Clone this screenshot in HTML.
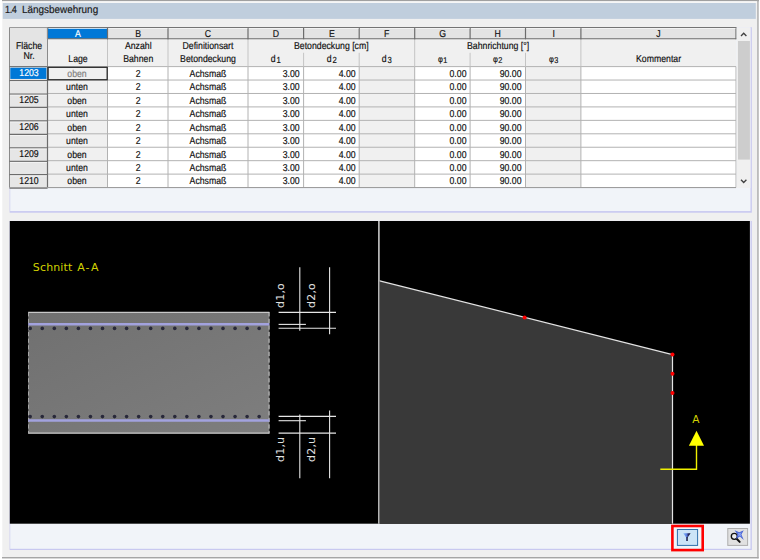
<!DOCTYPE html>
<html lang="de">
<head>
<meta charset="utf-8">
<title>1.4 Längsbewehrung</title>
<style>
html,body{margin:0;padding:0;background:#fff;}
body{width:760px;height:560px;overflow:hidden;position:relative;font-family:"Liberation Sans",sans-serif;}
#bg{position:absolute;left:0;top:0;width:760px;height:560px;display:block;}
.t,.title{position:absolute;white-space:nowrap;color:#101010;font-size:10.0px;overflow:visible;text-rendering:geometricPrecision;-webkit-text-stroke:0.18px currentColor;transform:scaleX(0.872);transform-origin:50% 50%;}
.r{transform-origin:100% 50%;}
.title{font-size:10.6px;color:#1a1a1a;transform:scaleX(0.937);transform-origin:0 50%;}
.title b{font-weight:normal;display:inline-block;letter-spacing:-0.55px;margin-right:3.3px;}
.sub{font-size:8.8px;position:relative;top:0.9px;margin-left:1.2px;}
.phi{font-size:8.6px;}
.phi+.sub{margin-left:0.3px;font-size:8.4px;top:0.5px;}
</style>
</head>
<body>
<svg id="bg" width="760" height="560" viewBox="0 0 760 560">
<rect x="0.00" y="0.00" width="760.00" height="560.00" fill="#ffffff" />
<rect x="2.30" y="0.00" width="756.20" height="558.40" fill="#f0f0f0" />
<rect x="2.00" y="0.00" width="757.00" height="1.25" fill="#a0a0a0" />
<rect x="2.30" y="1.25" width="755.00" height="1.70" fill="#f6f6f6" />
<rect x="757.30" y="0.00" width="1.30" height="558.40" fill="#a6a6a6" />
<rect x="2.00" y="557.00" width="756.60" height="1.40" fill="#a6a6a6" />
<rect x="2.80" y="3.00" width="753.00" height="15.90" fill="#c0cedd" />
<rect x="9.60" y="27.20" width="742.20" height="185.50" fill="#c8c8f0" />
<rect x="10.20" y="27.20" width="740.30" height="183.90" fill="#f1f4f9" />
<rect x="9.50" y="27.50" width="726.50" height="160.06" fill="#ffffff" />
<rect x="9.50" y="27.50" width="726.50" height="39.10" fill="#f0f0f0" />
<rect x="9.50" y="27.50" width="38.00" height="39.10" fill="#e4e4e4" />
<rect x="47.50" y="27.50" width="60.00" height="11.30" fill="#0078d7" />
<rect x="107.50" y="27.50" width="60.50" height="11.30" fill="#e3e3e3" />
<rect x="168.00" y="27.50" width="80.00" height="11.30" fill="#e3e3e3" />
<rect x="248.00" y="27.50" width="55.60" height="11.30" fill="#e3e3e3" />
<rect x="303.60" y="27.50" width="55.60" height="11.30" fill="#e3e3e3" />
<rect x="359.20" y="27.50" width="55.50" height="11.30" fill="#e3e3e3" />
<rect x="414.70" y="27.50" width="55.40" height="11.30" fill="#e3e3e3" />
<rect x="470.10" y="27.50" width="55.40" height="11.30" fill="#e3e3e3" />
<rect x="525.50" y="27.50" width="55.40" height="11.30" fill="#e3e3e3" />
<rect x="580.90" y="27.50" width="155.10" height="11.30" fill="#e3e3e3" />
<rect x="47.50" y="66.60" width="60.00" height="120.96" fill="#f0f0f0" />
<rect x="359.20" y="66.60" width="55.50" height="120.96" fill="#f0f0f0" />
<rect x="525.50" y="66.60" width="55.40" height="120.96" fill="#f0f0f0" />
<rect x="9.50" y="66.60" width="38.00" height="120.96" fill="#e6e6e6" />
<rect x="10.30" y="67.70" width="36.10" height="11.24" fill="#0078d7" />
<line x1="47.50" y1="80.04" x2="736.00" y2="80.04" stroke="#b2b2b2" stroke-width="1" />
<line x1="47.50" y1="93.48" x2="736.00" y2="93.48" stroke="#b2b2b2" stroke-width="1" />
<line x1="47.50" y1="106.92" x2="736.00" y2="106.92" stroke="#b2b2b2" stroke-width="1" />
<line x1="47.50" y1="120.36" x2="736.00" y2="120.36" stroke="#b2b2b2" stroke-width="1" />
<line x1="47.50" y1="133.80" x2="736.00" y2="133.80" stroke="#b2b2b2" stroke-width="1" />
<line x1="47.50" y1="147.24" x2="736.00" y2="147.24" stroke="#b2b2b2" stroke-width="1" />
<line x1="47.50" y1="160.68" x2="736.00" y2="160.68" stroke="#b2b2b2" stroke-width="1" />
<line x1="47.50" y1="174.12" x2="736.00" y2="174.12" stroke="#b2b2b2" stroke-width="1" />
<line x1="47.50" y1="187.56" x2="736.00" y2="187.56" stroke="#b2b2b2" stroke-width="1" />
<line x1="47.50" y1="66.60" x2="736.00" y2="66.60" stroke="#b2b2b2" stroke-width="1" />
<line x1="107.50" y1="66.60" x2="107.50" y2="187.56" stroke="#b2b2b2" stroke-width="1" />
<line x1="168.00" y1="66.60" x2="168.00" y2="187.56" stroke="#b2b2b2" stroke-width="1" />
<line x1="248.00" y1="66.60" x2="248.00" y2="187.56" stroke="#b2b2b2" stroke-width="1" />
<line x1="303.60" y1="66.60" x2="303.60" y2="187.56" stroke="#b2b2b2" stroke-width="1" />
<line x1="359.20" y1="66.60" x2="359.20" y2="187.56" stroke="#b2b2b2" stroke-width="1" />
<line x1="414.70" y1="66.60" x2="414.70" y2="187.56" stroke="#b2b2b2" stroke-width="1" />
<line x1="470.10" y1="66.60" x2="470.10" y2="187.56" stroke="#b2b2b2" stroke-width="1" />
<line x1="525.50" y1="66.60" x2="525.50" y2="187.56" stroke="#b2b2b2" stroke-width="1" />
<line x1="580.90" y1="66.60" x2="580.90" y2="187.56" stroke="#b2b2b2" stroke-width="1" />
<line x1="736.00" y1="66.60" x2="736.00" y2="187.56" stroke="#b2b2b2" stroke-width="1" />
<line x1="107.50" y1="38.80" x2="107.50" y2="66.60" stroke="#c4c4c4" stroke-width="1" />
<line x1="168.00" y1="38.80" x2="168.00" y2="66.60" stroke="#c4c4c4" stroke-width="1" />
<line x1="248.00" y1="38.80" x2="248.00" y2="66.60" stroke="#c4c4c4" stroke-width="1" />
<line x1="414.70" y1="38.80" x2="414.70" y2="66.60" stroke="#c4c4c4" stroke-width="1" />
<line x1="580.90" y1="38.80" x2="580.90" y2="66.60" stroke="#c4c4c4" stroke-width="1" />
<line x1="303.60" y1="52.80" x2="303.60" y2="66.60" stroke="#c4c4c4" stroke-width="1" />
<line x1="359.20" y1="52.80" x2="359.20" y2="66.60" stroke="#c4c4c4" stroke-width="1" />
<line x1="470.10" y1="52.80" x2="470.10" y2="66.60" stroke="#c4c4c4" stroke-width="1" />
<line x1="525.50" y1="52.80" x2="525.50" y2="66.60" stroke="#c4c4c4" stroke-width="1" />
<line x1="47.50" y1="38.80" x2="736.50" y2="38.80" stroke="#6c6c6c" stroke-width="1.1" />
<line x1="47.50" y1="27.50" x2="47.50" y2="39.30" stroke="#6c6c6c" stroke-width="1.2" />
<line x1="107.50" y1="27.50" x2="107.50" y2="39.30" stroke="#6c6c6c" stroke-width="1.2" />
<line x1="168.00" y1="27.50" x2="168.00" y2="39.30" stroke="#6c6c6c" stroke-width="1.2" />
<line x1="248.00" y1="27.50" x2="248.00" y2="39.30" stroke="#6c6c6c" stroke-width="1.2" />
<line x1="303.60" y1="27.50" x2="303.60" y2="39.30" stroke="#6c6c6c" stroke-width="1.2" />
<line x1="359.20" y1="27.50" x2="359.20" y2="39.30" stroke="#6c6c6c" stroke-width="1.2" />
<line x1="414.70" y1="27.50" x2="414.70" y2="39.30" stroke="#6c6c6c" stroke-width="1.2" />
<line x1="470.10" y1="27.50" x2="470.10" y2="39.30" stroke="#6c6c6c" stroke-width="1.2" />
<line x1="525.50" y1="27.50" x2="525.50" y2="39.30" stroke="#6c6c6c" stroke-width="1.2" />
<line x1="580.90" y1="27.50" x2="580.90" y2="39.30" stroke="#6c6c6c" stroke-width="1.2" />
<line x1="736.00" y1="27.50" x2="736.00" y2="39.30" stroke="#6c6c6c" stroke-width="1.2" />
<line x1="48.40" y1="28.50" x2="106.90" y2="28.50" stroke="#f8f8f8" stroke-width="0.8" />
<line x1="108.40" y1="28.50" x2="167.40" y2="28.50" stroke="#f8f8f8" stroke-width="0.8" />
<line x1="168.90" y1="28.50" x2="247.40" y2="28.50" stroke="#f8f8f8" stroke-width="0.8" />
<line x1="248.90" y1="28.50" x2="303.00" y2="28.50" stroke="#f8f8f8" stroke-width="0.8" />
<line x1="304.50" y1="28.50" x2="358.60" y2="28.50" stroke="#f8f8f8" stroke-width="0.8" />
<line x1="360.10" y1="28.50" x2="414.10" y2="28.50" stroke="#f8f8f8" stroke-width="0.8" />
<line x1="415.60" y1="28.50" x2="469.50" y2="28.50" stroke="#f8f8f8" stroke-width="0.8" />
<line x1="471.00" y1="28.50" x2="524.90" y2="28.50" stroke="#f8f8f8" stroke-width="0.8" />
<line x1="526.40" y1="28.50" x2="580.30" y2="28.50" stroke="#f8f8f8" stroke-width="0.8" />
<line x1="581.80" y1="28.50" x2="735.40" y2="28.50" stroke="#f8f8f8" stroke-width="0.8" />
<line x1="9.50" y1="27.50" x2="47.50" y2="27.50" stroke="#9a9a9a" stroke-width="1.0" />
<line x1="47.50" y1="27.50" x2="736.50" y2="27.50" stroke="#747474" stroke-width="1.0" />
<line x1="9.50" y1="27.50" x2="9.50" y2="187.56" stroke="#8a8a8a" stroke-width="1.0" />
<line x1="9.50" y1="80.64" x2="47.50" y2="80.64" stroke="#6c6c6c" stroke-width="1.3" />
<line x1="9.50" y1="94.08" x2="47.50" y2="94.08" stroke="#6c6c6c" stroke-width="1.3" />
<line x1="9.50" y1="107.52" x2="47.50" y2="107.52" stroke="#6c6c6c" stroke-width="1.3" />
<line x1="9.50" y1="120.96" x2="47.50" y2="120.96" stroke="#6c6c6c" stroke-width="1.3" />
<line x1="9.50" y1="134.40" x2="47.50" y2="134.40" stroke="#6c6c6c" stroke-width="1.3" />
<line x1="9.50" y1="147.84" x2="47.50" y2="147.84" stroke="#6c6c6c" stroke-width="1.3" />
<line x1="9.50" y1="161.28" x2="47.50" y2="161.28" stroke="#6c6c6c" stroke-width="1.3" />
<line x1="9.50" y1="174.72" x2="47.50" y2="174.72" stroke="#6c6c6c" stroke-width="1.3" />
<line x1="9.50" y1="188.16" x2="47.50" y2="188.16" stroke="#6c6c6c" stroke-width="1.3" />
<line x1="9.50" y1="66.60" x2="47.50" y2="66.60" stroke="#6c6c6c" stroke-width="1.0" />
<line x1="47.50" y1="66.60" x2="47.50" y2="188.06" stroke="#6c6c6c" stroke-width="1.2" />
<line x1="47.50" y1="27.50" x2="47.50" y2="66.60" stroke="#8a8a8a" stroke-width="1.0" />
<line x1="10.10" y1="81.74" x2="46.90" y2="81.74" stroke="#f6f6f6" stroke-width="0.8" />
<line x1="10.10" y1="95.18" x2="46.90" y2="95.18" stroke="#f6f6f6" stroke-width="0.8" />
<line x1="10.10" y1="108.62" x2="46.90" y2="108.62" stroke="#f6f6f6" stroke-width="0.8" />
<line x1="10.10" y1="122.06" x2="46.90" y2="122.06" stroke="#f6f6f6" stroke-width="0.8" />
<line x1="10.10" y1="135.50" x2="46.90" y2="135.50" stroke="#f6f6f6" stroke-width="0.8" />
<line x1="10.10" y1="148.94" x2="46.90" y2="148.94" stroke="#f6f6f6" stroke-width="0.8" />
<line x1="10.10" y1="162.38" x2="46.90" y2="162.38" stroke="#f6f6f6" stroke-width="0.8" />
<line x1="10.10" y1="175.82" x2="46.90" y2="175.82" stroke="#f6f6f6" stroke-width="0.8" />
<line x1="9.50" y1="187.56" x2="736.00" y2="187.56" stroke="#9c9c9c" stroke-width="1.0" />
<rect x="48.10" y="67.30" width="59.10" height="12.44" fill="#f0f0f0" stroke="#303030" stroke-width="1.35"/>
<rect x="736.60" y="27.50" width="13.80" height="160.46" fill="#f0f0f0" />
<rect x="738.00" y="41.00" width="11.90" height="118.60" fill="#cdcdcd" />
<path d="M741.0 36.0 L743.7 33.3 L746.4 36.0" fill="none" stroke="#404040" stroke-width="1.35"/>
<path d="M741.0 179.8 L743.7 182.5 L746.4 179.8" fill="none" stroke="#404040" stroke-width="1.35"/>
<rect x="9.60" y="220.90" width="742.20" height="329.10" fill="#c8c8f0" />
<rect x="10.20" y="220.90" width="740.30" height="327.90" fill="#f1f4f9" />
<rect x="9.80" y="221.00" width="740.10" height="302.70" fill="#000000" />
<defs><linearGradient id="slab" x1="0" y1="0" x2="1" y2="1">
<stop offset="0" stop-color="#707070"/><stop offset="1" stop-color="#7e7e7e"/></linearGradient></defs>
<rect x="28.20" y="312.20" width="241.20" height="121.20" fill="url(#slab)" />
<line x1="28.20" y1="312.40" x2="269.40" y2="312.40" stroke="#c8c8c8" stroke-width="1.2" />
<line x1="28.20" y1="433.20" x2="269.40" y2="433.20" stroke="#c8c8c8" stroke-width="1.2" />
<line x1="28.50" y1="312.20" x2="28.50" y2="433.40" stroke="#b8b8b8" stroke-width="0.8" stroke-dasharray="4.2 2.4"/>
<line x1="269.10" y1="312.20" x2="269.10" y2="433.40" stroke="#d8d8d8" stroke-width="0.9" stroke-dasharray="4.2 2.4"/>
<line x1="28.20" y1="324.20" x2="269.40" y2="324.20" stroke="#a2a2de" stroke-width="2.6" />
<line x1="28.20" y1="420.50" x2="269.40" y2="420.50" stroke="#a2a2de" stroke-width="2.6" />
<circle cx="30.20" cy="328.4" r="1.8" fill="#28283a"/>
<circle cx="30.20" cy="416.6" r="1.8" fill="#28283a"/>
<circle cx="42.25" cy="328.4" r="1.8" fill="#28283a"/>
<circle cx="42.25" cy="416.6" r="1.8" fill="#28283a"/>
<circle cx="54.30" cy="328.4" r="1.8" fill="#28283a"/>
<circle cx="54.30" cy="416.6" r="1.8" fill="#28283a"/>
<circle cx="66.35" cy="328.4" r="1.8" fill="#28283a"/>
<circle cx="66.35" cy="416.6" r="1.8" fill="#28283a"/>
<circle cx="78.40" cy="328.4" r="1.8" fill="#28283a"/>
<circle cx="78.40" cy="416.6" r="1.8" fill="#28283a"/>
<circle cx="90.45" cy="328.4" r="1.8" fill="#28283a"/>
<circle cx="90.45" cy="416.6" r="1.8" fill="#28283a"/>
<circle cx="102.50" cy="328.4" r="1.8" fill="#28283a"/>
<circle cx="102.50" cy="416.6" r="1.8" fill="#28283a"/>
<circle cx="114.55" cy="328.4" r="1.8" fill="#28283a"/>
<circle cx="114.55" cy="416.6" r="1.8" fill="#28283a"/>
<circle cx="126.60" cy="328.4" r="1.8" fill="#28283a"/>
<circle cx="126.60" cy="416.6" r="1.8" fill="#28283a"/>
<circle cx="138.65" cy="328.4" r="1.8" fill="#28283a"/>
<circle cx="138.65" cy="416.6" r="1.8" fill="#28283a"/>
<circle cx="150.70" cy="328.4" r="1.8" fill="#28283a"/>
<circle cx="150.70" cy="416.6" r="1.8" fill="#28283a"/>
<circle cx="162.75" cy="328.4" r="1.8" fill="#28283a"/>
<circle cx="162.75" cy="416.6" r="1.8" fill="#28283a"/>
<circle cx="174.80" cy="328.4" r="1.8" fill="#28283a"/>
<circle cx="174.80" cy="416.6" r="1.8" fill="#28283a"/>
<circle cx="186.85" cy="328.4" r="1.8" fill="#28283a"/>
<circle cx="186.85" cy="416.6" r="1.8" fill="#28283a"/>
<circle cx="198.90" cy="328.4" r="1.8" fill="#28283a"/>
<circle cx="198.90" cy="416.6" r="1.8" fill="#28283a"/>
<circle cx="210.95" cy="328.4" r="1.8" fill="#28283a"/>
<circle cx="210.95" cy="416.6" r="1.8" fill="#28283a"/>
<circle cx="223.00" cy="328.4" r="1.8" fill="#28283a"/>
<circle cx="223.00" cy="416.6" r="1.8" fill="#28283a"/>
<circle cx="235.05" cy="328.4" r="1.8" fill="#28283a"/>
<circle cx="235.05" cy="416.6" r="1.8" fill="#28283a"/>
<circle cx="247.10" cy="328.4" r="1.8" fill="#28283a"/>
<circle cx="247.10" cy="416.6" r="1.8" fill="#28283a"/>
<circle cx="259.15" cy="328.4" r="1.8" fill="#28283a"/>
<circle cx="259.15" cy="416.6" r="1.8" fill="#28283a"/>
<line x1="299.80" y1="267.20" x2="299.80" y2="330.70" stroke="#e6e6e6" stroke-width="1.1" />
<line x1="329.60" y1="267.20" x2="329.60" y2="334.20" stroke="#e6e6e6" stroke-width="1.1" />
<line x1="278.60" y1="312.40" x2="336.00" y2="312.40" stroke="#e6e6e6" stroke-width="1.1" />
<line x1="278.60" y1="324.40" x2="305.90" y2="324.40" stroke="#e6e6e6" stroke-width="1.1" />
<line x1="278.60" y1="328.30" x2="336.00" y2="328.30" stroke="#e6e6e6" stroke-width="1.1" />
<line x1="299.80" y1="414.60" x2="299.80" y2="478.20" stroke="#e6e6e6" stroke-width="1.1" />
<line x1="329.60" y1="410.60" x2="329.60" y2="478.20" stroke="#e6e6e6" stroke-width="1.1" />
<line x1="278.60" y1="416.40" x2="336.00" y2="416.40" stroke="#e6e6e6" stroke-width="1.1" />
<line x1="278.60" y1="420.70" x2="305.90" y2="420.70" stroke="#e6e6e6" stroke-width="1.1" />
<line x1="278.60" y1="433.10" x2="336.00" y2="433.10" stroke="#e6e6e6" stroke-width="1.1" />
<text x="32.80" y="271.40" font-family="'DejaVu Sans', 'Liberation Sans', sans-serif" letter-spacing="0.15" font-size="11.0" fill="#d2d200" text-anchor="start">Schnitt <tspan dx="1.0">A</tspan><tspan dx="1.0">-</tspan><tspan dx="1.4">A</tspan></text>
<text x="284.30" y="307.90" font-family="'DejaVu Sans', 'Liberation Sans', sans-serif" letter-spacing="0.15" font-size="11.0" fill="#e0e0e0" text-anchor="start" transform="rotate(-90 284.30 307.90)">d1,o</text>
<text x="315.30" y="307.90" font-family="'DejaVu Sans', 'Liberation Sans', sans-serif" letter-spacing="0.15" font-size="11.0" fill="#e0e0e0" text-anchor="start" transform="rotate(-90 315.30 307.90)">d2,o</text>
<text x="284.30" y="461.90" font-family="'DejaVu Sans', 'Liberation Sans', sans-serif" letter-spacing="0.15" font-size="11.0" fill="#e0e0e0" text-anchor="start" transform="rotate(-90 284.30 461.90)">d1,u</text>
<text x="315.30" y="461.90" font-family="'DejaVu Sans', 'Liberation Sans', sans-serif" letter-spacing="0.15" font-size="11.0" fill="#e0e0e0" text-anchor="start" transform="rotate(-90 315.30 461.90)">d2,u</text>
<line x1="378.90" y1="221.00" x2="378.90" y2="523.70" stroke="#c8c8c8" stroke-width="1.6" />
<polygon points="379.7,280.9 672.5,354.7 672.5,523.7 379.7,523.7" fill="#393939"/>
<line x1="379.70" y1="280.90" x2="672.50" y2="354.70" stroke="#e4e4e4" stroke-width="1.2" />
<line x1="672.50" y1="354.70" x2="672.50" y2="523.70" stroke="#e4e4e4" stroke-width="1.2" />
<circle cx="524.6" cy="317.6" r="2.0" fill="#ff0000"/>
<circle cx="672.5" cy="354.4" r="2.0" fill="#ff0000"/>
<circle cx="672.5" cy="373.8" r="2.0" fill="#ff0000"/>
<circle cx="672.5" cy="393.1" r="2.0" fill="#ff0000"/>
<path d="M660.3 469.3 L696.5 469.3 L696.5 445" fill="none" stroke="#f0f000" stroke-width="1.4"/>
<polygon points="696.5,430.8 704.0,445.8 688.9,445.8" fill="#ffff00"/>
<text x="695.90" y="422.60" font-family="'DejaVu Sans', 'Liberation Sans', sans-serif" letter-spacing="0.15" font-size="10.6" fill="#d2d200" text-anchor="middle">A</text>
<rect x="672.4" y="526.0" width="30.3" height="24.1" fill="none" stroke="#ff0000" stroke-width="2.6"/>
<rect x="677.4" y="529.5" width="20.2" height="15.9" fill="#cce4f7" stroke="#2f6fab" stroke-width="1.0"/>
<defs><linearGradient id="fun" x1="0" y1="0" x2="1" y2="0">
<stop offset="0" stop-color="#8cc0ff"/><stop offset="0.45" stop-color="#5a7ee0"/><stop offset="0.75" stop-color="#1c1c50"/><stop offset="1" stop-color="#101030"/></linearGradient></defs>
<path d="M683.2 533.3 L690.6 533.3 L687.6 537.6 L686.2 537.6 Z" fill="url(#fun)"/>
<defs><linearGradient id="fun2" x1="0" y1="0" x2="1" y2="0"><stop offset="0" stop-color="#4a66c8"/><stop offset="0.5" stop-color="#141438"/><stop offset="1" stop-color="#080818"/></linearGradient></defs>
<rect x="686.1" y="537.0" width="1.6" height="4.0" fill="url(#fun2)"/>
<rect x="727.8" y="528.5" width="19.8" height="16.9" fill="#e1e1e1" stroke="#adadad" stroke-width="1.0"/>
<circle cx="734.3" cy="536.3" r="3.0" fill="#ececec" stroke="#101010" stroke-width="1.35"/>
<line x1="736.9" y1="539.0" x2="739.7" y2="541.9" stroke="#101010" stroke-width="2.0" stroke-linecap="round"/>
<path d="M734.6 530.3 L739.3 532.3 L743.8 530.3 L741.4 534.5 L743.8 539.9 L739.9 536.5 L736.0 538.9 L737.5 534.4 Z" fill="#4863d4"/>
<path d="M737.3 532.2 L739.4 533.2 L741.6 532.2 L740.5 534.3 L741.6 537.0 L739.6 535.4 L737.9 536.6 L738.5 534.3 Z" fill="#86a2f6"/>
</svg>
<div class="title" style="left:4.70px;top:2.70px;width:30.00px;height:15.90px;line-height:15.90px;text-align:left;letter-spacing:-0.5px;transform:scaleX(0.86);">1.4</div>
<div class="title" style="left:21.60px;top:2.70px;width:200.00px;height:15.90px;line-height:15.90px;text-align:left;">Längsbewehrung</div>
<div class="t" style="left:47.50px;top:28.00px;width:60.00px;height:13.44px;line-height:13.44px;text-align:center;color:#fff;">A</div>
<div class="t" style="left:107.50px;top:28.00px;width:60.50px;height:13.44px;line-height:13.44px;text-align:center;">B</div>
<div class="t" style="left:168.00px;top:28.00px;width:80.00px;height:13.44px;line-height:13.44px;text-align:center;">C</div>
<div class="t" style="left:248.00px;top:28.00px;width:55.60px;height:13.44px;line-height:13.44px;text-align:center;">D</div>
<div class="t" style="left:303.60px;top:28.00px;width:55.60px;height:13.44px;line-height:13.44px;text-align:center;">E</div>
<div class="t" style="left:359.20px;top:28.00px;width:55.50px;height:13.44px;line-height:13.44px;text-align:center;">F</div>
<div class="t" style="left:414.70px;top:28.00px;width:55.40px;height:13.44px;line-height:13.44px;text-align:center;">G</div>
<div class="t" style="left:470.10px;top:28.00px;width:55.40px;height:13.44px;line-height:13.44px;text-align:center;">H</div>
<div class="t" style="left:525.50px;top:28.00px;width:55.40px;height:13.44px;line-height:13.44px;text-align:center;">I</div>
<div class="t" style="left:580.90px;top:28.00px;width:155.10px;height:13.44px;line-height:13.44px;text-align:center;">J</div>
<div class="t" style="left:9.50px;top:40.00px;width:38.00px;height:13.44px;line-height:13.44px;text-align:center;">Fläche</div>
<div class="t" style="left:9.50px;top:50.00px;width:38.00px;height:13.44px;line-height:13.44px;text-align:center;">Nr.</div>
<div class="t" style="left:47.50px;top:53.00px;width:60.00px;height:13.44px;line-height:13.44px;text-align:center;">Lage</div>
<div class="t" style="left:107.50px;top:40.00px;width:60.50px;height:13.44px;line-height:13.44px;text-align:center;">Anzahl</div>
<div class="t" style="left:107.50px;top:53.00px;width:60.50px;height:13.44px;line-height:13.44px;text-align:center;">Bahnen</div>
<div class="t" style="left:168.00px;top:40.00px;width:80.00px;height:13.44px;line-height:13.44px;text-align:center;">Definitionsart</div>
<div class="t" style="left:168.00px;top:53.00px;width:80.00px;height:13.44px;line-height:13.44px;text-align:center;">Betondeckung</div>
<div class="t" style="left:248.00px;top:40.00px;width:166.70px;height:13.44px;line-height:13.44px;text-align:center;">Betondeckung [cm]</div>
<div class="t" style="left:414.70px;top:40.00px;width:166.20px;height:13.44px;line-height:13.44px;text-align:center;">Bahnrichtung [°]</div>
<div class="t" style="left:248.00px;top:53.00px;width:55.60px;height:13.44px;line-height:13.44px;text-align:center;">d<span class="sub">1</span></div>
<div class="t" style="left:414.70px;top:53.00px;width:55.40px;height:13.44px;line-height:13.44px;text-align:center;"><span class="phi">φ</span><span class="sub">1</span></div>
<div class="t" style="left:303.60px;top:53.00px;width:55.60px;height:13.44px;line-height:13.44px;text-align:center;">d<span class="sub">2</span></div>
<div class="t" style="left:470.10px;top:53.00px;width:55.40px;height:13.44px;line-height:13.44px;text-align:center;"><span class="phi">φ</span><span class="sub">2</span></div>
<div class="t" style="left:359.20px;top:53.00px;width:55.50px;height:13.44px;line-height:13.44px;text-align:center;">d<span class="sub">3</span></div>
<div class="t" style="left:525.50px;top:53.00px;width:55.40px;height:13.44px;line-height:13.44px;text-align:center;"><span class="phi">φ</span><span class="sub">3</span></div>
<div class="t" style="left:580.90px;top:53.00px;width:155.10px;height:13.44px;line-height:13.44px;text-align:center;">Kommentar</div>
<div class="t" style="left:9.70px;top:67.00px;width:38.00px;height:13.44px;line-height:13.44px;text-align:center;color:#fff;">1203</div>
<div class="t" style="left:46.60px;top:68.00px;width:60.00px;height:13.44px;line-height:13.44px;text-align:center;color:#808080;">oben</div>
<div class="t" style="left:107.50px;top:68.00px;width:60.50px;height:13.44px;line-height:13.44px;text-align:center;">2</div>
<div class="t" style="left:168.00px;top:68.00px;width:80.00px;height:13.44px;line-height:13.44px;text-align:center;">Achsmaß</div>
<div class="t r" style="left:248.00px;top:68.00px;width:51.70px;height:13.44px;line-height:13.44px;text-align:right;">3.00</div>
<div class="t r" style="left:303.60px;top:68.00px;width:51.70px;height:13.44px;line-height:13.44px;text-align:right;">4.00</div>
<div class="t r" style="left:414.70px;top:68.00px;width:51.50px;height:13.44px;line-height:13.44px;text-align:right;">0.00</div>
<div class="t r" style="left:470.10px;top:68.00px;width:51.50px;height:13.44px;line-height:13.44px;text-align:right;">90.00</div>
<div class="t" style="left:46.60px;top:81.00px;width:60.00px;height:13.44px;line-height:13.44px;text-align:center;">unten</div>
<div class="t" style="left:107.50px;top:81.00px;width:60.50px;height:13.44px;line-height:13.44px;text-align:center;">2</div>
<div class="t" style="left:168.00px;top:81.00px;width:80.00px;height:13.44px;line-height:13.44px;text-align:center;">Achsmaß</div>
<div class="t r" style="left:248.00px;top:81.00px;width:51.70px;height:13.44px;line-height:13.44px;text-align:right;">3.00</div>
<div class="t r" style="left:303.60px;top:81.00px;width:51.70px;height:13.44px;line-height:13.44px;text-align:right;">4.00</div>
<div class="t r" style="left:414.70px;top:81.00px;width:51.50px;height:13.44px;line-height:13.44px;text-align:right;">0.00</div>
<div class="t r" style="left:470.10px;top:81.00px;width:51.50px;height:13.44px;line-height:13.44px;text-align:right;">90.00</div>
<div class="t" style="left:9.70px;top:94.00px;width:38.00px;height:13.44px;line-height:13.44px;text-align:center;">1205</div>
<div class="t" style="left:46.60px;top:95.00px;width:60.00px;height:13.44px;line-height:13.44px;text-align:center;">oben</div>
<div class="t" style="left:107.50px;top:95.00px;width:60.50px;height:13.44px;line-height:13.44px;text-align:center;">2</div>
<div class="t" style="left:168.00px;top:95.00px;width:80.00px;height:13.44px;line-height:13.44px;text-align:center;">Achsmaß</div>
<div class="t r" style="left:248.00px;top:95.00px;width:51.70px;height:13.44px;line-height:13.44px;text-align:right;">3.00</div>
<div class="t r" style="left:303.60px;top:95.00px;width:51.70px;height:13.44px;line-height:13.44px;text-align:right;">4.00</div>
<div class="t r" style="left:414.70px;top:95.00px;width:51.50px;height:13.44px;line-height:13.44px;text-align:right;">0.00</div>
<div class="t r" style="left:470.10px;top:95.00px;width:51.50px;height:13.44px;line-height:13.44px;text-align:right;">90.00</div>
<div class="t" style="left:46.60px;top:108.00px;width:60.00px;height:13.44px;line-height:13.44px;text-align:center;">unten</div>
<div class="t" style="left:107.50px;top:108.00px;width:60.50px;height:13.44px;line-height:13.44px;text-align:center;">2</div>
<div class="t" style="left:168.00px;top:108.00px;width:80.00px;height:13.44px;line-height:13.44px;text-align:center;">Achsmaß</div>
<div class="t r" style="left:248.00px;top:108.00px;width:51.70px;height:13.44px;line-height:13.44px;text-align:right;">3.00</div>
<div class="t r" style="left:303.60px;top:108.00px;width:51.70px;height:13.44px;line-height:13.44px;text-align:right;">4.00</div>
<div class="t r" style="left:414.70px;top:108.00px;width:51.50px;height:13.44px;line-height:13.44px;text-align:right;">0.00</div>
<div class="t r" style="left:470.10px;top:108.00px;width:51.50px;height:13.44px;line-height:13.44px;text-align:right;">90.00</div>
<div class="t" style="left:9.70px;top:121.00px;width:38.00px;height:13.44px;line-height:13.44px;text-align:center;">1206</div>
<div class="t" style="left:46.60px;top:122.00px;width:60.00px;height:13.44px;line-height:13.44px;text-align:center;">oben</div>
<div class="t" style="left:107.50px;top:122.00px;width:60.50px;height:13.44px;line-height:13.44px;text-align:center;">2</div>
<div class="t" style="left:168.00px;top:122.00px;width:80.00px;height:13.44px;line-height:13.44px;text-align:center;">Achsmaß</div>
<div class="t r" style="left:248.00px;top:122.00px;width:51.70px;height:13.44px;line-height:13.44px;text-align:right;">3.00</div>
<div class="t r" style="left:303.60px;top:122.00px;width:51.70px;height:13.44px;line-height:13.44px;text-align:right;">4.00</div>
<div class="t r" style="left:414.70px;top:122.00px;width:51.50px;height:13.44px;line-height:13.44px;text-align:right;">0.00</div>
<div class="t r" style="left:470.10px;top:122.00px;width:51.50px;height:13.44px;line-height:13.44px;text-align:right;">90.00</div>
<div class="t" style="left:46.60px;top:135.00px;width:60.00px;height:13.44px;line-height:13.44px;text-align:center;">unten</div>
<div class="t" style="left:107.50px;top:135.00px;width:60.50px;height:13.44px;line-height:13.44px;text-align:center;">2</div>
<div class="t" style="left:168.00px;top:135.00px;width:80.00px;height:13.44px;line-height:13.44px;text-align:center;">Achsmaß</div>
<div class="t r" style="left:248.00px;top:135.00px;width:51.70px;height:13.44px;line-height:13.44px;text-align:right;">3.00</div>
<div class="t r" style="left:303.60px;top:135.00px;width:51.70px;height:13.44px;line-height:13.44px;text-align:right;">4.00</div>
<div class="t r" style="left:414.70px;top:135.00px;width:51.50px;height:13.44px;line-height:13.44px;text-align:right;">0.00</div>
<div class="t r" style="left:470.10px;top:135.00px;width:51.50px;height:13.44px;line-height:13.44px;text-align:right;">90.00</div>
<div class="t" style="left:9.70px;top:148.00px;width:38.00px;height:13.44px;line-height:13.44px;text-align:center;">1209</div>
<div class="t" style="left:46.60px;top:149.00px;width:60.00px;height:13.44px;line-height:13.44px;text-align:center;">oben</div>
<div class="t" style="left:107.50px;top:149.00px;width:60.50px;height:13.44px;line-height:13.44px;text-align:center;">2</div>
<div class="t" style="left:168.00px;top:149.00px;width:80.00px;height:13.44px;line-height:13.44px;text-align:center;">Achsmaß</div>
<div class="t r" style="left:248.00px;top:149.00px;width:51.70px;height:13.44px;line-height:13.44px;text-align:right;">3.00</div>
<div class="t r" style="left:303.60px;top:149.00px;width:51.70px;height:13.44px;line-height:13.44px;text-align:right;">4.00</div>
<div class="t r" style="left:414.70px;top:149.00px;width:51.50px;height:13.44px;line-height:13.44px;text-align:right;">0.00</div>
<div class="t r" style="left:470.10px;top:149.00px;width:51.50px;height:13.44px;line-height:13.44px;text-align:right;">90.00</div>
<div class="t" style="left:46.60px;top:162.00px;width:60.00px;height:13.44px;line-height:13.44px;text-align:center;">unten</div>
<div class="t" style="left:107.50px;top:162.00px;width:60.50px;height:13.44px;line-height:13.44px;text-align:center;">2</div>
<div class="t" style="left:168.00px;top:162.00px;width:80.00px;height:13.44px;line-height:13.44px;text-align:center;">Achsmaß</div>
<div class="t r" style="left:248.00px;top:162.00px;width:51.70px;height:13.44px;line-height:13.44px;text-align:right;">3.00</div>
<div class="t r" style="left:303.60px;top:162.00px;width:51.70px;height:13.44px;line-height:13.44px;text-align:right;">4.00</div>
<div class="t r" style="left:414.70px;top:162.00px;width:51.50px;height:13.44px;line-height:13.44px;text-align:right;">0.00</div>
<div class="t r" style="left:470.10px;top:162.00px;width:51.50px;height:13.44px;line-height:13.44px;text-align:right;">90.00</div>
<div class="t" style="left:9.70px;top:175.00px;width:38.00px;height:13.44px;line-height:13.44px;text-align:center;">1210</div>
<div class="t" style="left:46.60px;top:175.00px;width:60.00px;height:13.44px;line-height:13.44px;text-align:center;">oben</div>
<div class="t" style="left:107.50px;top:175.00px;width:60.50px;height:13.44px;line-height:13.44px;text-align:center;">2</div>
<div class="t" style="left:168.00px;top:175.00px;width:80.00px;height:13.44px;line-height:13.44px;text-align:center;">Achsmaß</div>
<div class="t r" style="left:248.00px;top:175.00px;width:51.70px;height:13.44px;line-height:13.44px;text-align:right;">3.00</div>
<div class="t r" style="left:303.60px;top:175.00px;width:51.70px;height:13.44px;line-height:13.44px;text-align:right;">4.00</div>
<div class="t r" style="left:414.70px;top:175.00px;width:51.50px;height:13.44px;line-height:13.44px;text-align:right;">0.00</div>
<div class="t r" style="left:470.10px;top:175.00px;width:51.50px;height:13.44px;line-height:13.44px;text-align:right;">90.00</div>
</body>
</html>
